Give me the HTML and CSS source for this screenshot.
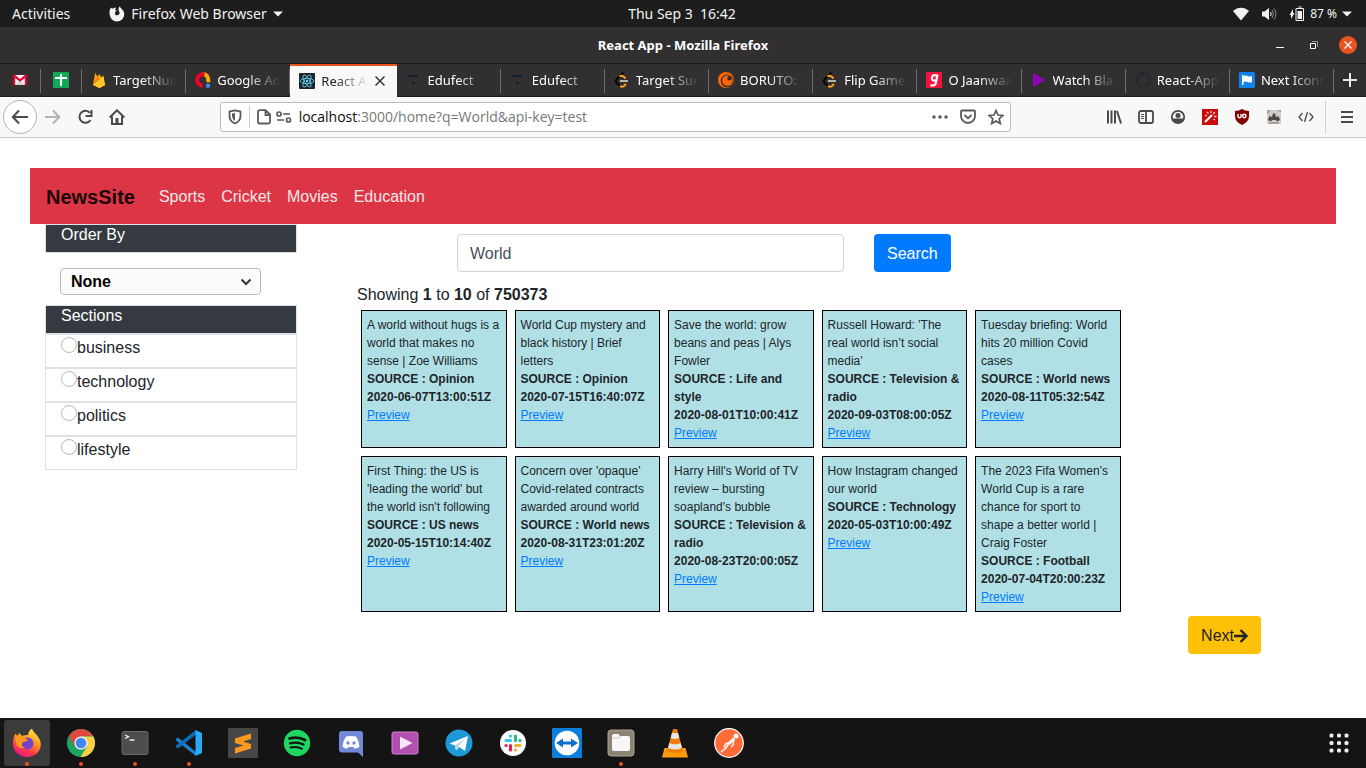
FILE: index.html
```html
<!DOCTYPE html>
<html lang="en">
<head>
<meta charset="utf-8">
<title>React App</title>
<link rel="stylesheet" href="styles.css">
</head>
<body>
<header class="topbar">
  <div class="topbar-left">
    <button class="sys-btn">Activities</button>
    <button class="sys-btn app-menu">
      <svg width="16" height="16" viewBox="0 0 16 16"><path fill="#f2f2f2" d="M1 3l2-1.600.6 1.500C4.500 2 6 1.300 7.500 2 6.500 2.500 6 3.300 6.200 4.200L8 4.500 6.200 6c-.6 1.500 0 3.300 1.900 3.300 2 0 3-2 2.100-3.800C9.300 4.300 9 2.300 11 .3c.2 1.500 1 2 2 2.900 3 3 3 7.300 0 10.200-2.800 2.700-7.300 2.600-10 0C.3 10.600 0 6.500 1 3z"/></svg>
      Firefox Web Browser
      <svg width="10" height="6" viewBox="0 0 10 6"><path fill="#f2f2f2" d="M0 .5h10L5 5.500z"/></svg>
    </button>
  </div>
  <time class="clock">Thu Sep 3&nbsp; 16:42</time>
  <div class="topbar-right">
    <svg width="16" height="14" viewBox="0 0 16 14"><path fill="#f2f2f2" d="M0 4c4.500-4.500 11.500-4.500 16 0L8 13.500z"/></svg>
    <svg width="16" height="14" viewBox="0 0 16 14"><path fill="#f2f2f2" d="M1 4.500h2.500L8 1v12L3.500 9.500H1z"/><path fill="none" stroke="#f2f2f2" d="M9.500 5q1.500 2 0 4"/><path fill="none" stroke="#888" d="M11 3q3 4 0 8M13 1.500q4 5.500 0 11"/></svg>
    <svg width="16" height="16" viewBox="0 0 16 16"><path fill="#f2f2f2" d="M4 3v4h1.500L2 13V9H.5z"/><path fill="none" stroke="#f2f2f2" d="M7 2.500h7.500v12H7zM9.500 1h3"/><path fill="#f2f2f2" d="M8.500 5h4.500v8H8.500z"/></svg>
    <span class="battery">87 %</span>
    <svg width="10" height="6" viewBox="0 0 10 6"><path fill="#f2f2f2" d="M0 .5h10L5 5.500z"/></svg>
  </div>
</header>

<div class="titlebar">
  <span></span>
  <strong>React App - Mozilla Firefox</strong>
  <div class="window-buttons">
    <button class="win-btn" aria-label="Minimize"><svg width="10" height="10" viewBox="0 0 10 10"><path stroke="#fff" d="M1 7.500h8"/></svg></button>
    <button class="win-btn" aria-label="Restore"><svg width="10" height="10" viewBox="0 0 10 10" fill="none"><path stroke="#999" d="M3 1.500h5.500V7"/><path stroke="#fff" d="M1.500 3.500h5v5h-5z"/></svg></button>
    <button class="win-btn close" aria-label="Close"><svg width="8" height="8" viewBox="0 0 8 8"><path stroke="#fff" stroke-width="1.300" d="M.5.5l7 7M7.500.5l-7 7"/></svg></button>
  </div>
</div>

<div class="tabs">
  <button class="tab pinned" aria-label="Gmail"><svg width="16" height="16" viewBox="0 0 16 16"><path fill="#f2f2f2" d="M2 3h12v10H2z"/><path fill="#d5d5d5" d="M3 13l5-5 5 5z"/><path fill="#e3022f" d="M1 3.500Q1 2.500 2.500 2.500L8 7l5.500-4.500Q15 2.500 15 3.500V13h-2.200V6L8 9.800 3.200 6v7H1z"/></svg></button>
  <button class="tab pinned" aria-label="Sheets"><svg width="16" height="16" viewBox="0 0 16 16"><rect width="16" height="16" rx="1" fill="#0fa958"/><path fill="#fff" d="M2 5h5V2h2v3h5v2H9v7H7V7H2z"/></svg></button>
  <button class="tab"><svg width="16" height="16" viewBox="0 0 16 16"><path fill="#ffa000" d="M2 13L4.200.8l2.200 3.800L8.500 2l6 11-6 3z"/><path fill="#f57c00" d="M2 13L6.500 4.500 9 8z"/><path fill="#ffca28" d="M2 13L12.500 3.500 14 13l-5.500 3z"/></svg><span class="tab-label">TargetNumber</span></button>
  <button class="tab"><svg width="16" height="16" viewBox="0 0 16 16" fill="none"><path stroke="#fbab06" stroke-width="4" d="M7.500 2.300c4.500-.5 6 3 6 8"/><path stroke="#f5002c" stroke-width="4" d="M9.500 2.200C.5 1.500 0 13 7.500 13.700"/><circle cx="13" cy="13.700" r="2.200" fill="#4285f4"/></svg><span class="tab-label">Google AdMob</span></button>
  <button class="tab active"><svg width="16" height="16" viewBox="0 0 16 16"><rect width="16" height="16" rx="1" fill="#20232a"/><g fill="none" stroke="#61dafb" stroke-width=".8"><ellipse cx="8" cy="8" rx="6.800" ry="2.600"/><ellipse cx="8" cy="8" rx="6.800" ry="2.600" transform="rotate(60 8 8)"/><ellipse cx="8" cy="8" rx="6.800" ry="2.600" transform="rotate(120 8 8)"/></g><circle cx="8" cy="8" r="1.200" fill="#61dafb"/></svg><span class="tab-label">React App</span><svg class="tab-close" width="10" height="10" viewBox="0 0 10 10"><path stroke="#333" stroke-width="1.500" d="M.5.5l9 9M9.500.5l-9 9"/></svg></button>
  <button class="tab"><svg width="16" height="16" viewBox="0 0 16 16"><path fill="#102030" d="M2 3h10v2H2zM6 10h3v2H6z"/></svg><span class="tab-label">Edufect</span></button>
  <button class="tab"><svg width="16" height="16" viewBox="0 0 16 16"><path fill="#102030" d="M2 3h10v2H2zM6 10h3v2H6z"/></svg><span class="tab-label">Edufect</span></button>
  <button class="tab"><svg width="16" height="16" viewBox="0 0 16 16" fill="none" stroke-width="2"><path stroke="#050505" d="M9.500.5L2.500 7.500q-1.300 1.500 0 3L6 14"/><path stroke="#ffa116" d="M5.500 4.500q2-1.500 4 0l2 2M6 14q2 1.500 4 0l2-2"/><path stroke="#b3b3b3" d="M6 9h8"/></svg><span class="tab-label">Target Sum</span></button>
  <button class="tab"><svg width="16" height="16" viewBox="0 0 16 16"><circle cx="8" cy="8" r="8" fill="#ff6500"/><circle cx="9.200" cy="9" r="6.400" fill="#322f30"/><circle cx="9.500" cy="8.500" r="5.300" fill="#ff6500"/><circle cx="11.500" cy="6.300" r="2.200" fill="#322f30"/></svg><span class="tab-label">BORUTO: NARUTO</span></button>
  <button class="tab"><svg width="16" height="16" viewBox="0 0 16 16" fill="none" stroke-width="2"><path stroke="#050505" d="M9.500.5L2.500 7.500q-1.300 1.500 0 3L6 14"/><path stroke="#ffa116" d="M5.500 4.500q2-1.500 4 0l2 2M6 14q2 1.500 4 0l2-2"/><path stroke="#b3b3b3" d="M6 9h8"/></svg><span class="tab-label">Flip Game</span></button>
  <button class="tab"><svg width="16" height="16" viewBox="0 0 16 16"><rect width="16" height="16" fill="#f5123d"/><path fill="none" stroke="#fff" stroke-width="2.200" d="M11.500 2.500L9.800 11q-.6 2.500-2.800 2.400H4.500M10.500 3.500q-3.500-1.500-4.500 2t3.500 3"/></svg><span class="tab-label">O Jaanwaale</span></button>
  <button class="tab"><svg width="16" height="16" viewBox="0 0 16 16"><path fill="#9400b8" d="M2 1l12 7-12 7z"/></svg><span class="tab-label">Watch Black</span></button>
  <button class="tab"><svg width="16" height="16" viewBox="0 0 16 16"><path fill="#24292e" d="M8 0a8 8 0 0 0-2.500 15.600c.4 0 .5-.2.5-.4v-1.500C3.800 14.200 3.300 12.800 3.300 12.800c-.4-1-.9-1.200-.9-1.200-.7-.5.1-.5.1-.5.800.1 1.200.8 1.200.8.7 1.200 1.900.9 2.300.7.1-.5.3-.9.5-1.100-1.800-.2-3.600-.9-3.600-4 0-.9.300-1.600.8-2.100-.1-.2-.4-1 .1-2.100 0 0 .7-.2 2.200.8a7.600 7.600 0 0 1 4 0c1.500-1 2.200-.8 2.200-.8.400 1.100.2 1.900.1 2.100.5.6.8 1.300.8 2.100 0 3.100-1.900 3.700-3.700 3.900.3.300.6.800.6 1.500v2.200c0 .2.100.5.500.4A8 8 0 0 0 8 0z"/></svg><span class="tab-label">React-Application</span></button>
  <button class="tab"><svg width="16" height="16" viewBox="0 0 16 16"><rect width="16" height="16" rx="1.500" fill="#1283ea"/><path fill="#fff" d="M3 3h1.500v10H3zM4.500 4q2-1 4 0t4.500 0v6q-2.500 1-4.500 0t-4 0z"/></svg><span class="tab-label">Next Icons | Font</span></button>
  <button class="new-tab" aria-label="New tab"><svg width="14" height="14" viewBox="0 0 14 14"><path stroke="#e8e8e8" stroke-width="2" d="M7 0v14M0 7h14"/></svg></button>
</div>

<nav class="toolbar" aria-label="Browser">
  <div class="nav-buttons">
    <button class="back" aria-label="Back"><svg width="18" height="16" viewBox="0 0 18 16" fill="none" stroke="#4a4a4a" stroke-width="2"><path d="M17 8H2M8 1.500L1.800 8 8 14.500"/></svg></button>
    <button aria-label="Forward"><svg width="16" height="16" viewBox="0 0 16 16" fill="none" stroke="#b4b4b4" stroke-width="2"><path d="M0 8h14M8 1.500L14.300 8 8 14.500"/></svg></button>
    <button aria-label="Reload"><svg width="16" height="16" viewBox="0 0 16 16" fill="none" stroke="#4a4a4a" stroke-width="2"><path d="M13 3.800A6 6 0 1 0 13.500 11M14.500 1v6H8.500"/></svg></button>
    <button aria-label="Home"><svg width="16" height="16" viewBox="0 0 16 16" fill="none" stroke="#4a4a4a" stroke-width="2"><path d="M.7 8.500L8 1.300l7.300 7.200M3 7.500V15h10V7.500"/><path d="M8 9v6" stroke-width="3"/></svg></button>
  </div>
  <span class="spacer"></span>
  <div class="urlbar">
    <svg width="14" height="16" viewBox="0 0 14 16"><path fill="none" stroke="#5a5a5a" stroke-width="1.800" d="M7 1.300L1.500 2.500v4.500q0 5 5.500 7.500 5.500-2.500 5.500-7.500V2.500z"/><path fill="#5a5a5a" d="M7 4v8Q4 10 4 7V4.500z"/></svg>
    <span class="url-sep"></span>
    <svg width="14" height="16" viewBox="0 0 14 16" fill="none" stroke="#5a5a5a" stroke-width="1.800"><path d="M3 1.200h5.500L13 5.500V13q0 1.500-1.500 1.500h-9Q1 14.500 1 13V3q0-1.800 2-1.800zM8.500 1.500v4.500H13"/></svg>
    <svg class="permissions" width="16" height="16" viewBox="0 0 16 16" fill="none" stroke="#5a5a5a" stroke-width="1.700"><circle cx="3" cy="5" r="2"/><path d="M7 5h7M1 11h7"/><circle cx="12.500" cy="11" r="2"/></svg>
    <div class="url"><span class="host">localhost</span>:3000/home?q=World&amp;api-key=test</div>
    <svg width="16" height="16" viewBox="0 0 16 16" fill="#5a5a5a"><circle cx="2" cy="8" r="1.800"/><circle cx="8" cy="8" r="1.800"/><circle cx="14" cy="8" r="1.800"/></svg>
    <svg width="16" height="16" viewBox="0 0 16 16" fill="none" stroke="#5a5a5a" stroke-width="1.800"><path d="M2 1.500h12q1 0 1 1V7a7 7 0 0 1-14 0V2.500q0-1 1-1zM4.500 6L8 9.300 11.500 6"/></svg>
    <svg width="16" height="16" viewBox="0 0 16 16" fill="none" stroke="#5a5a5a" stroke-width="1.700"><path d="M8 1.500l2 4.500 4.900.5-3.700 3.200 1.100 4.900L8 12.100l-4.300 2.500 1.100-4.900L1.100 6.500 6 6z"/></svg>
  </div>
  <span class="spacer"></span>
  <div class="tool-buttons">
    <button aria-label="Library"><svg width="16" height="16" viewBox="0 0 16 16" stroke="#4a4a4a" stroke-width="2"><path d="M2 1.500v13M5.500 1.500v13M9 1.500v13M11 2l4 12.500"/></svg></button>
    <button aria-label="Sidebar"><svg width="16" height="16" viewBox="0 0 16 16" fill="none" stroke="#4a4a4a" stroke-width="1.800"><rect x="1" y="2" width="14" height="12" rx="2"/><path d="M8 2v12"/><path stroke-width="1" d="M3 5.500h3M3 7.500h3M3 9.500h3"/></svg></button>
    <button aria-label="Account"><svg width="16" height="16" viewBox="0 0 16 16"><circle cx="8" cy="8" r="6.200" fill="none" stroke="#4a4a4a" stroke-width="1.800"/><circle cx="8" cy="6.500" r="2.500" fill="#4a4a4a"/><path fill="#4a4a4a" d="M2.500 9.500h11Q12 14 8 14T2.500 9.500z"/></svg></button>
    <button aria-label="Magic wand"><svg width="16" height="16" viewBox="0 0 16 16"><path fill="#c90a0a" d="M0 0h16v16H0z"/><path stroke="#fff" stroke-width="2.200" d="M3 13l7-7"/><path stroke="#ffd6d6" stroke-width="1.300" d="M5 3l1.500 1.500M9 2v2M13 3l-2 2M12 7.500h2.500M11.500 10l1.500 1M3 7l2-1"/></svg></button>
    <button aria-label="Content blocker"><svg width="16" height="16" viewBox="0 0 16 16"><path fill="#800000" d="M8 0q3 2 7 2v5q0 6-7 9Q1 13 1 7V2q4 0 7-2z"/><path fill="none" stroke="#fff" stroke-width="1.400" d="M4 5v2.500q0 1.300 1.500 1.300T7 7.500V5"/><circle cx="10.300" cy="7" r="1.700" fill="none" stroke="#fff" stroke-width="1.400"/></svg></button>
    <button aria-label="Extension"><svg width="16" height="16" viewBox="0 0 16 16"><rect x="1" y="1" width="14" height="14" rx="1" fill="#d3ccc5"/><path fill="#4c4a49" d="M2 11l1.500-4L6 8l1-3.500h2L10 8l2.500-1L14 11l-3 1.500-1-1.500H6l-1 1.500z"/><path fill="#aaa39d" d="M1 1h4l-3 4H1zM11 1h4v3zM3 13h10v2H3z"/></svg></button>
    <button aria-label="Developer"><svg width="16" height="16" viewBox="0 0 16 16" fill="none" stroke="#4a4a4a" stroke-width="1.300"><path d="M4.500 4L1 8l3.500 4M11.500 4L15 8l-3.500 4M9.500 3l-3 10"/></svg></button>
  </div>
  <button class="menu" aria-label="Menu"><svg width="12" height="12" viewBox="0 0 12 12"><path stroke="#4a4a4a" stroke-width="2" d="M0 1h12M0 6h12M0 11h12"/></svg></button>
</nav>

<main class="page">
  <nav class="navbar">
    <a class="brand" href="#">NewsSite</a>
    <a href="#">Sports</a><a href="#">Cricket</a><a href="#">Movies</a><a href="#">Education</a>
  </nav>
  <div class="layout">
    <aside class="sidebar">
      <label class="side-head" for="order">Order By</label>
      <div class="select-wrap">
        <select id="order" class="order"><option>None</option></select>
        <svg class="chevron" width="12" height="8" viewBox="0 0 12 8"><path fill="none" stroke="#333" stroke-width="2" d="M1.500 1.500L6 6l4.500-4.500"/></svg>
      </div>
      <div class="side-head">Sections</div>
      <ul class="sections">
        <li><input type="radio" name="section" id="s1"><label for="s1">business</label></li>
        <li><input type="radio" name="section" id="s2"><label for="s2">technology</label></li>
        <li><input type="radio" name="section" id="s3"><label for="s3">politics</label></li>
        <li><input type="radio" name="section" id="s4"><label for="s4">lifestyle</label></li>
      </ul>
    </aside>
    <section class="results">
      <form class="search">
        <input class="search-input" type="text" value="World" aria-label="Search news">
        <button class="btn btn-primary" type="button">Search</button>
      </form>
      <p class="summary">Showing <b>1</b> to <b>10</b> of <b>750373</b></p>
      <div class="cards">
        <article class="card">A world without hugs is a world that makes no sense | Zoe Williams<b>SOURCE : Opinion</b><b>2020-06-07T13:00:51Z</b><a href="#">Preview</a></article>
        <article class="card">World Cup mystery and black history | Brief letters<b>SOURCE : Opinion</b><b>2020-07-15T16:40:07Z</b><a href="#">Preview</a></article>
        <article class="card">Save the world: grow beans and peas | Alys Fowler<b>SOURCE : Life and style</b><b>2020-08-01T10:00:41Z</b><a href="#">Preview</a></article>
        <article class="card">Russell Howard: 'The real world isn’t social media'<b>SOURCE : Television &amp; radio</b><b>2020-09-03T08:00:05Z</b><a href="#">Preview</a></article>
        <article class="card">Tuesday briefing: World hits 20 million Covid cases<b>SOURCE : World news</b><b>2020-08-11T05:32:54Z</b><a href="#">Preview</a></article>
        <article class="card">First Thing: the US is 'leading the world' but the world isn't following<b>SOURCE : US news</b><b>2020-05-15T10:14:40Z</b><a href="#">Preview</a></article>
        <article class="card">Concern over 'opaque' Covid-related contracts awarded around world<b>SOURCE : World news</b><b>2020-08-31T23:01:20Z</b><a href="#">Preview</a></article>
        <article class="card">Harry Hill's World of TV review – bursting soapland's bubble<b>SOURCE : Television &amp; radio</b><b>2020-08-23T20:00:05Z</b><a href="#">Preview</a></article>
        <article class="card">How Instagram changed our world<b>SOURCE : Technology</b><b>2020-05-03T10:00:49Z</b><a href="#">Preview</a></article>
        <article class="card">The 2023 Fifa Women’s World Cup is a rare chance for sport to shape a better world | Craig Foster<b>SOURCE : Football</b><b>2020-07-04T20:00:23Z</b><a href="#">Preview</a></article>
      </div>
      <div class="pager">
        <button class="btn btn-warning" type="button">Next<svg width="14" height="16" viewBox="0 0 14 16" fill="none" stroke="#212529" stroke-width="2.400"><path d="M0 8h12M6.500 2l6 6-6 6"/></svg></button>
      </div>
    </section>
  </div>
</main>

<footer class="dock">
  <button class="app current running" aria-label="Firefox"><svg width="30" height="30" viewBox="0 0 30 30"><defs><linearGradient id="ff" x1=".8" y1="0" x2=".3" y2="1"><stop offset="0" stop-color="#fff44f"/><stop offset=".4" stop-color="#ff9a1f"/><stop offset=".75" stop-color="#ff3750"/><stop offset="1" stop-color="#e31587"/></linearGradient></defs><path fill="url(#ff)" d="M3 6l3 2 1-3 3 3c2-1 4-1 6-1 0-3 2-5 4-6.500.5 3 3.500 4.500 5.500 7.500 2 3 3.500 5 3.300 9C28.500 24 22.500 29 15 29S1 23.500 1 16C1 12 1.500 9 3 6z"/><circle cx="15.500" cy="15.500" r="6" fill="#7543c9"/><path fill="#ff9a1f" d="M3 6l3 2 1-3 3 3c2 .5 3 3 6 3.500-1 2.500-5 2-6 4-.8 2 1 4 3 4-3 2-8 0-9-4z"/></svg></button>
  <button class="app running" aria-label="Chrome"><svg width="30" height="30" viewBox="0 0 30 30"><circle cx="15" cy="15" r="14" fill="#1da462"/><path fill="#dd4b3e" d="M2.900 8A14 14 0 0 1 27.100 8L15 8.500 9 18.500z"/><path fill="#ffcd46" d="M15 8.500H27.400A14 14 0 0 1 14.500 29L21 18.500z"/><circle cx="15" cy="15" r="6.600" fill="#f4f4f4"/><circle cx="15" cy="15" r="5.300" fill="#4285f4"/></svg></button>
  <button class="app running" aria-label="Terminal"><svg width="30" height="30" viewBox="0 0 30 30"><rect x="2" y="3.500" width="26" height="23" rx="2" fill="#4d4d4d" stroke="#696969"/><path fill="none" stroke="#eee" stroke-width="1.300" d="M5 7l3.500 1.800L5 10.500M9.500 12h5"/></svg></button>
  <button class="app running" aria-label="Code"><svg width="30" height="30" viewBox="0 0 30 30"><path fill="#1684cf" d="M2 11l2-1.500L22 24v4L2 12.500z"/><path fill="#0d6cb3" d="M2 19l2 1.500L22 6.500V2L2 17.500z"/><path fill="#2aa9f4" d="M21.500 2L28 5v20l-6.500 3z"/></svg></button>
  <button class="app" aria-label="Sublime Text"><svg width="30" height="30" viewBox="0 0 30 30"><rect width="30" height="30" rx="1" fill="#474747"/><path fill="#ff9820" d="M7 10.500L23 5.500v5.500l-8 2.500 8 2.500v4.500L7 25.500V20l8.500-2.500L7 15z"/></svg></button>
  <button class="app" aria-label="Spotify"><svg width="30" height="30" viewBox="0 0 30 30"><circle cx="15" cy="15" r="13.200" fill="#1ed760"/><g fill="none" stroke="#141414" stroke-linecap="round"><path stroke-width="2.800" d="M7.500 10.500q8.500-2.300 15.500 1.500"/><path stroke-width="2.300" d="M8 15.300q7.500-2 13.500 1.300"/><path stroke-width="1.900" d="M8.500 19.500q6.500-1.500 11.500 1.300"/></g></svg></button>
  <button class="app" aria-label="Discord"><svg width="30" height="30" viewBox="0 0 30 30"><path fill="#7289da" d="M6 3h18q3 0 3 3v23l-5-4.500H6q-3 0-3-3V6q0-3 3-3z"/><path fill="#fff" d="M10 8.500q5-1 10 0 3 4 3.500 10-2 2.500-5 2l-1-1.500h-5l-1 1.500q-3 .5-5-2 .5-6 3.500-10z"/><circle cx="12" cy="15" r="1.700" fill="#7289da"/><circle cx="18" cy="15" r="1.700" fill="#7289da"/></svg></button>
  <button class="app" aria-label="Videos"><svg width="30" height="30" viewBox="0 0 30 30"><rect x="2" y="4" width="26" height="22" rx="2" fill="#b44fb2" stroke="#cf83ca"/><path fill="#f7e8f3" d="M10 8.500L22.500 15 10 21.500z"/></svg></button>
  <button class="app" aria-label="Telegram"><svg width="30" height="30" viewBox="0 0 30 30"><circle cx="15" cy="15" r="13.500" fill="#1f98d6"/><path fill="#fff" d="M5.500 15.500L24 8l-3 15-6-4-3 3.500-1-5z"/><path fill="#b7d4e5" d="M11 17.500L22 10l-8 8.500-2 4z"/></svg></button>
  <button class="app" aria-label="Slack"><svg width="30" height="30" viewBox="0 0 30 30"><circle cx="15" cy="15" r="13" fill="#fff"/><g fill="none" stroke-width="3.200" stroke-linecap="round"><path stroke="#36c5f0" d="M8 12.500h4.500M12.500 8v.1"/><path stroke="#2eb67d" d="M17.500 8v4.500M22 12.500h-.1"/><path stroke="#ecb22e" d="M17.500 17.500H22M17.500 22v-.1"/><path stroke="#e01e5a" d="M12.500 17.500V22M8 17.500h.1"/></g></svg></button>
  <button class="app" aria-label="TeamViewer"><svg width="30" height="30" viewBox="0 0 30 30"><rect width="30" height="30" rx="1" fill="#0b7edb"/><circle cx="15" cy="15" r="12.300" fill="#fff"/><path fill="#0b70c9" d="M4 15l7-4.500v3h8v-3l7 4.500-7 4.500v-3h-8v3z"/></svg></button>
  <button class="app running" aria-label="Files"><svg width="30" height="30" viewBox="0 0 30 30"><rect x="2" y="2" width="26" height="26" rx="3" fill="#8c8472" stroke="#aaa391"/><path fill="#f7f7f7" d="M6 8q0-2 2-2h4.500L14 8h8q2 0 2 2v11q0 2-2 2H8q-2 0-2-2z"/><path fill="none" stroke="#d1cec4" d="M6 10h7l1.500-2"/></svg></button>
  <button class="app" aria-label="VLC"><svg width="30" height="30" viewBox="0 0 30 30"><path fill="#ff9c0c" d="M4.500 20h21L28 29.500H2z"/><path fill="#f07e05" d="M14 1h2q1 0 1.300 1L23 23q-8 4-16 0L12.700 2Q13 1 14 1z"/><path fill="#e6e6e6" d="M12 5h6l1.300 5q-4.300 1.800-8.600 0zM9.300 15q5.700 2.500 11.400 0l1.200 5q-6.900 3-13.800 0z"/></svg></button>
  <button class="app" aria-label="Postman"><svg width="30" height="30" viewBox="0 0 30 30"><circle cx="15" cy="15" r="14.300" fill="#ff6c37" stroke="#fff" stroke-width="1.200"/><circle cx="22" cy="8" r="2.500" fill="#fff"/><path fill="none" stroke="#fff" stroke-width="2.800" d="M20 10.500L14.500 16"/><path fill="none" stroke="#fff" stroke-width="1.500" d="M14.500 16l-3 4.500L7 24M16 15l-4 .5-2 4M20 11l-1 6-2 2"/></svg></button>
  <span class="spacer"></span>
  <button class="app" aria-label="Show applications"><svg width="20" height="20" viewBox="0 0 20 20" fill="#f2f2f2"><rect x=".5" y=".5" width="4" height="4" rx="1.500"/><rect x="8" y=".5" width="4" height="4" rx="1.500"/><rect x="15.500" y=".5" width="4" height="4" rx="1.500"/><rect x=".5" y="8" width="4" height="4" rx="1.500"/><rect x="8" y="8" width="4" height="4" rx="1.500"/><rect x="15.500" y="8" width="4" height="4" rx="1.500"/><rect x=".5" y="15.500" width="4" height="4" rx="1.500"/><rect x="8" y="15.500" width="4" height="4" rx="1.500"/><rect x="15.500" y="15.500" width="4" height="4" rx="1.500"/></svg></button>
</footer>
</body>
</html>
```
FILE: styles.css
```css
* { box-sizing: border-box; }
body {
  margin: 0;
  min-height: 100vh;
  display: flex;
  flex-direction: column;
  background: #fff;
  color: #212529;
  font: 16px/24px "Liberation Sans", Arial, sans-serif;
}
button {
  margin: 0;
  padding: 0;
  border: 0;
  background: none;
  color: inherit;
  font: inherit;
  display: flex;
  align-items: center;
}
svg { flex: none; display: block; }
.spacer { flex: 1; }

.topbar, .titlebar, .tabs { font-family: "Noto Sans", sans-serif; }

.topbar {
  display: grid;
  grid-template-columns: 1fr auto 1fr;
  align-items: center;
  height: 27px;
  padding: 0 14px 0 12px;
  background: #1d1d1d;
  color: #f2f2f2;
  font-size: 14px;
  line-height: 27px;
}
.topbar-left { display: flex; gap: 39px; }
.app-menu { gap: 6px; }
.topbar-right { display: flex; align-items: center; justify-content: flex-end; gap: 12px; }
.battery { margin: 0 -7px; font-size: 12px; }

.titlebar {
  display: grid;
  grid-template-columns: 1fr auto 1fr;
  align-items: center;
  height: 37px;
  padding: 0 9px;
  background: #322f30;
  border-bottom: 1px solid #1d1b1c;
  color: #fff;
  font-size: 13px;
}
.window-buttons { display: flex; justify-content: flex-end; gap: 16px; }
.win-btn { width: 18px; height: 18px; justify-content: center; border-radius: 50%; }
.win-btn.close { background: #e95420; }

.tabs {
  display: flex;
  height: 33px;
  background: #322f30;
  color: #fff;
  font-size: 13px;
}
.tab {
  position: relative;
  flex: 1 1 0;
  min-width: 0;
  gap: 6px;
  padding: 0 10px 0 9px;
  border-bottom: 1px solid #1d1b1c;
}
.tab::after {
  content: "";
  position: absolute;
  right: 0;
  top: 5px;
  bottom: 3px;
  width: 1px;
  background: #6d6b6c;
}
.tab.pinned { flex: 0 0 41px; padding: 0 12px; }
.tab-label {
  flex: 1;
  overflow: hidden;
  white-space: nowrap;
  text-align: left;
  mask-image: linear-gradient(to left, transparent, #000 34px);
}
.tab.active {
  padding: 0 12px 2px 9px;
  background: #f8f8f8;
  color: #222;
  border-top: 2px solid #e95420;
  border-bottom: 0;
}
.tab.active::after { display: none; }
.new-tab { flex: none; width: 32px; justify-content: center; border-bottom: 1px solid #1d1b1c; }

.toolbar {
  display: flex;
  align-items: center;
  height: 41px;
  background: #f8f8f8;
  border-bottom: 1px solid #c8c8c8;
  color: #777;
  font-family: "Open Sans", sans-serif;
  font-size: 14px;
}
.toolbar .spacer { flex: 3; }
.nav-buttons { display: flex; align-items: center; gap: 16px; padding: 0 5px 0 3px; }
.back {
  width: 34px;
  height: 34px;
  justify-content: center;
  border: 1px solid #b4b4b4;
  border-radius: 50%;
  background: #fff;
  margin-right: -8px;
}
.urlbar {
  flex: 26;
  display: flex;
  align-items: center;
  gap: 7px;
  height: 30px;
  padding: 0 6px 0 7px;
  border: 1px solid #bcbcbc;
  border-radius: 3px;
  background: #fff;
}
.urlbar svg:nth-last-child(-n+2) { margin-left: 5px; }
.urlbar .permissions { margin-left: -2px; }
.url-sep { width: 1px; height: 22px; background: #ccc; }
.url { flex: 1; white-space: nowrap; }
.host { color: #0c0c0d; }
.tool-buttons { display: flex; gap: 16px; padding: 0 11px 0 5px; }
.menu { width: 41px; height: 33px; padding-left: 2px; justify-content: center; border-left: 1px solid #d0d0d0; }

.page { flex: 1; padding: 30px; }
.navbar {
  display: flex;
  align-items: center;
  gap: 16px;
  height: 56px;
  padding: 1px 16px 0;
  background: #dc3545;
}
.navbar a { color: #f8e8ea; text-decoration: none; }
.navbar .brand { margin-right: 8px; color: #1a060a; font-size: 20px; font-weight: bold; }

.layout { display: grid; grid-template-columns: 252fr 979fr; gap: 60px; padding-left: 15px; }
.side-head {
  display: block;
  height: 29px;
  padding: 0 15px;
  border: 1px solid #dee2e6;
  background: #343a40;
  color: #fff;
  line-height: 20px;
}
.select-wrap { display: flex; align-items: center; margin: 15px 36px 10px 15px; }
.order {
  appearance: none;
  width: 100%;
  height: 27px;
  padding: 0 10px;
  border: 1px solid #bbb;
  border-radius: 4px;
  background: #fbfbfb;
  color: #000;
  font: bold 16px "Liberation Sans", Arial, sans-serif;
}
.chevron { margin-left: -21px; pointer-events: none; }
.sections { list-style: none; margin: 0; padding: 0; }
.sections li {
  display: flex;
  align-items: flex-start;
  height: 34px;
  padding: 1px 15px;
  border: 1px solid #dee2e6;
}
.sections input {
  appearance: none;
  width: 16px;
  height: 16px;
  margin: 1px 0 0;
  border: 1px solid #b8b8b8;
  border-radius: 50%;
  background: #fff;
}

.search { display: flex; gap: 30px; padding: 10px 0 11px 100px; }
.search-input {
  flex: 0 1 387px;
  min-width: 0;
  height: 38px;
  padding: 1px 12px 0;
  border: 1px solid #ced4da;
  border-radius: 4px;
  background: #fff;
  color: #495057;
  font: 16px "Liberation Sans", Arial, sans-serif;
}
.btn { height: 38px; padding: 1px 13px 0; border-radius: 4px; }
.btn-primary { background: #007bff; color: #fff; }
.btn-warning { background: #ffc107; color: #212529; }
.summary { margin: 0; }
.cards {
  display: grid;
  grid-template-columns: repeat(5, 1fr);
  gap: 8px;
  margin: 3px 22% 4px 4px;
}
.card {
  padding: 5px;
  border: 1px solid #000;
  background: #b0e0e6;
  font-size: 12px;
  line-height: 18px;
}
.card b { display: block; }
.card a { color: #007bff; }
.pager { display: flex; justify-content: flex-end; padding-right: 75px; }

.dock {
  display: flex;
  align-items: center;
  gap: 8px;
  height: 50px;
  padding: 0 4px;
  background: #141414;
}
.app { position: relative; width: 46px; height: 46px; justify-content: center; border-radius: 3px; }
.app.current { background: #3b3b3b; }
.app.running::after {
  content: "";
  position: absolute;
  left: 21px;
  bottom: 0;
  width: 4px;
  height: 4px;
  border-radius: 50%;
  background: #e95420;
}
```
